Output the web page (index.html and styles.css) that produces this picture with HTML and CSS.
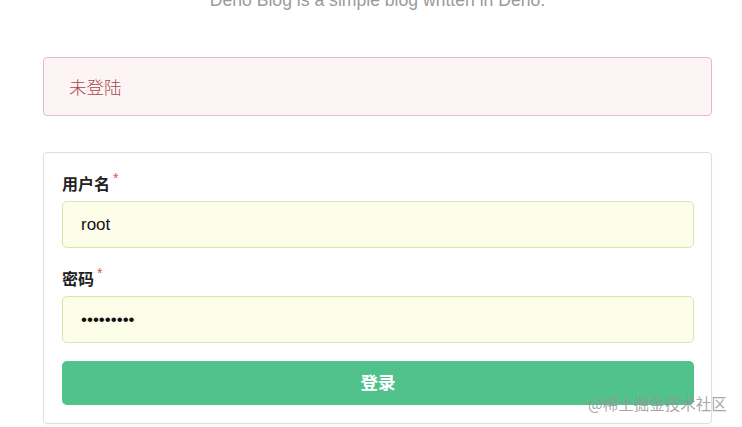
FILE: index.html
```html
<!DOCTYPE html>
<html lang="zh-CN">
<head>
<meta charset="utf-8">
<title>Deno Blog - 登录</title>
<link rel="stylesheet" href="styles.css">
</head>
<body>
<main class="page">
  <p class="subtitle">Deno Blog is a simple blog written in Deno.</p>
  <div class="alert">未登陆</div>
  <form class="card">
    <label class="label" for="username">用户名<span class="req">*</span></label>
    <input class="input" id="username" type="text" value="root">
    <label class="label label-2" for="password">密码<span class="req">*</span></label>
    <input class="input" id="password" type="password" value="123456789">
    <button class="btn" type="button">登录</button>
  </form>
</main>
<div class="watermark">@稀土掘金技术社区</div>
</body>
</html>
```

FILE: styles.css
```css
html, body {
  margin: 0;
  padding: 0;
  background: #ffffff;
  height: 100%;
  overflow: hidden;
}
body {
  font-family: "Liberation Sans", "Noto Sans CJK SC", sans-serif;
  color: #333;
}
.page {
  width: 669px;
  margin-left: 43px;
  display: flex;
  flex-direction: column;
}
.subtitle {
  margin: -12px 0 0 0;
  height: 24px;
  line-height: 24px;
  font-size: 17.6px;
  color: #9a9a9a;
  text-align: center;
}
.alert {
  margin-top: 45px;
  box-sizing: border-box;
  height: 59px;
  border: 1px solid #e6bcc4;
  border-radius: 4px;
  background: #fcf4f5;
  color: #a9474f;
  font-family: "Noto Sans CJK SC", "Liberation Sans", sans-serif;
  font-weight: 300;
  font-size: 17.5px;
  padding-left: 25px;
  display: flex;
  align-items: center;
}
.card {
  margin: 36px 0 0 0;
  border: 1px solid #dedede;
  border-radius: 4px;
  padding: 19px 17px 18px 18px;
  display: flex;
  flex-direction: column;
  box-shadow: 0 1px 2px rgba(0,0,0,0.04);
}
.label {
  font-family: "Noto Sans CJK SC", "Liberation Sans", sans-serif;
  font-weight: 700;
  font-size: 16px;
  line-height: 22px;
  color: #222;
  margin-bottom: 7px;
}
.label-2 {
  margin-top: 19px;
}
.req {
  color: #d9534f;
  font-family: "Liberation Sans", sans-serif;
  font-size: 14px;
  font-weight: 400;
  vertical-align: top;
  position: relative;
  top: -5px;
  margin-left: 3px;
}
.input {
  box-sizing: border-box;
  height: 47px;
  width: 100%;
  margin: 0;
  border: 1px solid #e0e3ac;
  border-radius: 5px;
  background: #fdfee9;
  padding: 0 18px;
  font-family: "Liberation Sans", sans-serif;
  font-size: 17px;
  color: #111;
  outline: none;
}
.btn {
  margin-top: 18px;
  height: 44px;
  line-height: 40px;
  width: 100%;
  border: none;
  border-radius: 5px;
  background: #52c28c;
  color: #ffffff;
  font-family: "Noto Sans CJK SC", "Liberation Sans", sans-serif;
  font-weight: 700;
  font-size: 17.5px;
  padding: 0 0 2px 0;
}
.watermark {
  position: absolute;
  left: 588px;
  top: 392px;
  font-family: "Noto Sans CJK SC", sans-serif;
  font-size: 15.5px;
  line-height: 22px;
  color: rgba(150,150,150,0.85);
}
```
